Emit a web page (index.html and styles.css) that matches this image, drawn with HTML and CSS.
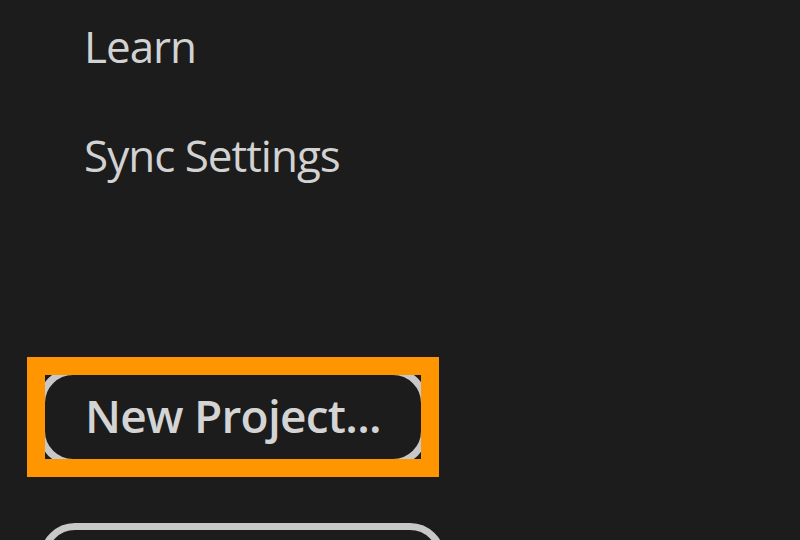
FILE: index.html
```html
<!DOCTYPE html>
<html lang="en">
<head>
<meta charset="utf-8">
<title>Start</title>
<link rel="stylesheet" href="styles.css">
</head>
<body>
<div class="panel">
  <nav class="nav">
    <a class="nav-item">Learn</a>
    <a class="nav-item">Sync Settings</a>
  </nav>
  <div class="actions">
    <div class="highlight">
      <button class="btn">New Project...</button>
    </div>
    <button class="btn btn-second" aria-label="Open Project"></button>
  </div>
</div>
</body>
</html>
```

FILE: styles.css
```css
html, body {
  margin: 0;
  padding: 0;
  background: #1c1c1c;
  width: 800px;
  height: 540px;
  overflow: hidden;
}

.panel {
  display: flex;
  flex-direction: column;
  align-items: flex-start;
  padding-top: 16px;
  font-family: "Open Sans", "Noto Sans", sans-serif;
  color: #d2d2d2;
}

.nav {
  display: flex;
  flex-direction: column;
  gap: 49px;
  padding-left: 84px;
}

.nav-item {
  display: block;
  font-size: 44px;
  line-height: 60px;
  letter-spacing: -1px;
  color: #d2d2d2;
}

.actions {
  display: flex;
  flex-direction: column;
  align-items: flex-start;
  gap: 57px;
  margin-top: 183px;
  padding-left: 38px;
}

.highlight {
  position: relative;
  display: flex;
}

.highlight::after {
  content: "";
  position: absolute;
  inset: -11px;
  border: 18px solid #ff9500;
  pointer-events: none;
}

.btn {
  display: block;
  height: 98px;
  box-sizing: border-box;
  border: 7px solid #c8c8c8;
  border-radius: 35px;
  background: #1c1c1c;
  color: #d4d4d4;
  font-family: "Open Sans", "Noto Sans", sans-serif;
  font-weight: 600;
  font-size: 46px;
  line-height: 80px;
  letter-spacing: -0.75px;
  padding: 0 40px 4px 40px;
  margin: 0;
}

.btn-second {
  width: 405px;
  margin-left: 2px;
}
```
